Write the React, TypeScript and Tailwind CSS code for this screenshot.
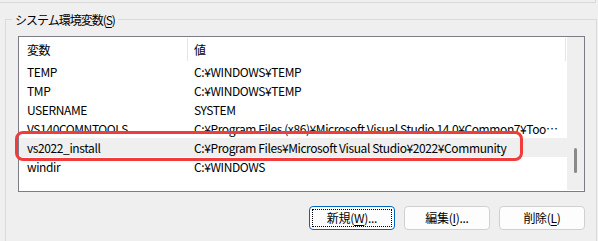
const rows = [
  { name: "TEMP", value: "C:¥WINDOWS¥TEMP" },
  { name: "TMP", value: "C:¥WINDOWS¥TEMP" },
  { name: "USERNAME", value: "SYSTEM" },
  { name: "VS140COMNTOOLS", value: "C:¥Program Files (x86)¥Microsoft Visual Studio 14.0¥Common7¥Tools¥" },
  { name: "vs2022_install", value: "C:¥Program Files¥Microsoft Visual Studio¥2022¥Community", selected: true },
  { name: "windir", value: "C:¥WINDOWS" },
];

function Btn({ label, hot, rest, focused }: { label: string; hot: string; rest: string; focused?: boolean }) {
  return (
    <button
      className={`relative w-[86px] h-[24px] rounded-[4px] bg-[#fdfdfd] border flex items-center justify-center ${
        focused ? "border-[#0067c0]" : "border-[#d0d0d0]"
      }`}
    >
      {focused && <span className="absolute inset-[2px] border border-dotted border-black" />}
      <span className="tracking-[-0.3px]">
        {label}(<span className="underline underline-offset-2">{hot}</span>){rest}
      </span>
    </button>
  );
}

export default function App() {
  return (
    <div className="relative w-[598px] h-[241px] overflow-hidden bg-[#efefef] text-[12px] text-black font-['Noto_Sans_CJK_JP','Noto_Sans',sans-serif] leading-none">
      <div className="h-[3px] w-[596px] border-b border-r border-[#d9d9d9]" />

      <div className="relative ml-[5px] mt-[16px] w-[592px] h-[230px] border-l border-t border-r border-[#dadada]">
        <div className="absolute left-[6px] top-[-9px] px-[3px] bg-[#efefef] leading-[18px] tracking-[-1px]">
          システム環境変数(<span className="underline underline-offset-2">S</span>)
        </div>

        <div className="ml-[12px] mt-[16px] w-[567px] h-[156px] border border-[#7a7d86] bg-white flex">
          <div className="w-[548px] flex flex-col tracking-[-0.4px]">
            <div className="flex h-[25px] shrink-0">
              <div className="w-[169px] pl-[8px] flex items-center border-r border-[#e5e5e5] my-[1px]">変数</div>
              <div className="w-[378px] pl-[6px] flex items-center border-r border-[#e5e5e5] my-[1px]">値</div>
            </div>
            {rows.map((r) => (
              <div key={r.name} className={`flex h-[19px] shrink-0 leading-[19px] ${r.selected ? "bg-[#efefef]" : ""}`}>
                <div className="w-[169px] pl-[8px] whitespace-nowrap">{r.name}</div>
                <div className="w-[371px] pl-[6px] whitespace-nowrap overflow-hidden text-ellipsis">{r.value}</div>
              </div>
            ))}
          </div>
          <div className="w-[17px] ml-auto bg-[#efefef] mb-[1px] flex flex-col">
            <div className="mt-[111px] mx-auto w-[3px] h-[25px] rounded-full bg-[#8a8a8a]" />
          </div>
        </div>

        <div className="flex justify-end gap-[9px] pr-[11px] mt-[14px]">
          <Btn label="新規" hot="W" rest="..." focused />
          <Btn label="編集" hot="I" rest="..." />
          <Btn label="削除" hot="L" rest="" />
        </div>
      </div>

      <div className="absolute left-[15px] top-[131px] w-[508px] h-[30px] border-[3px] border-[#f03c3c] rounded-[8px]" />
    </div>
  );
}
